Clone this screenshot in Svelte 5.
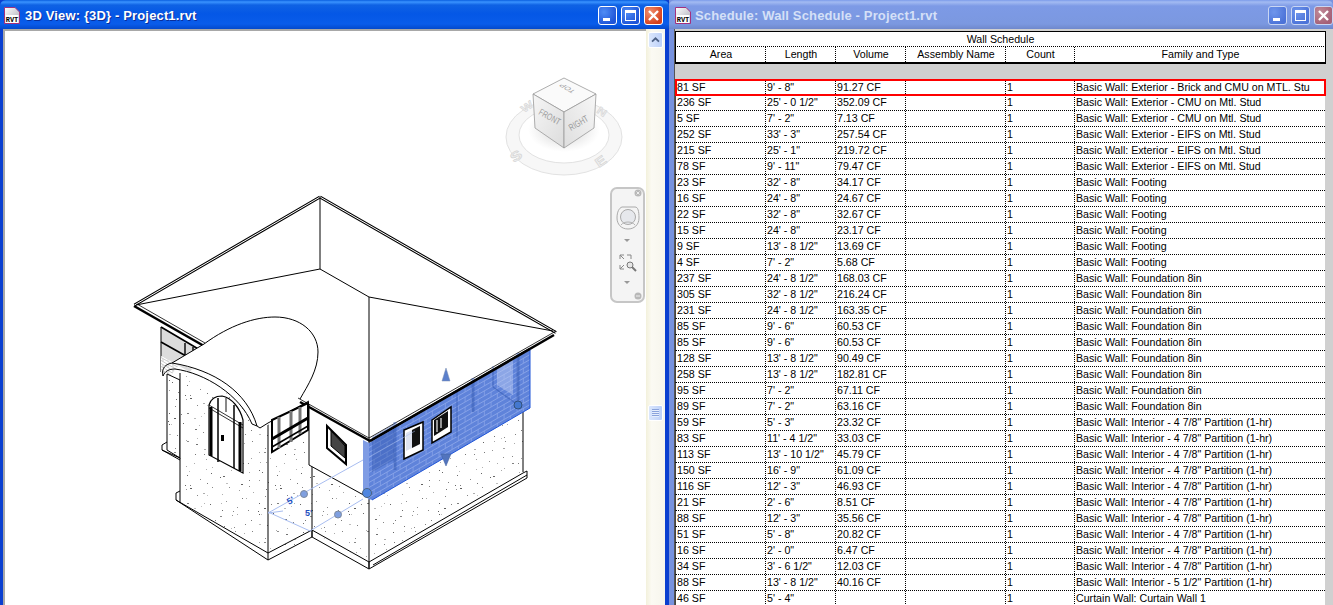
<script lang="ts">
    const ext = "Basic Wall: Exterior - ";
    const part = 'Basic Wall: Interior - 4 7/8" Partition (1-hr)';
    const found = "Basic Wall: Foundation 8in";
    const foot = "Basic Wall: Footing";

    // area, length, volume, family and type
    const rows = [
        ["81 SF", `9' - 8"`, "91.27 CF", ext + "Brick and CMU on MTL. Stu"],
        ["236 SF", `25' - 0 1/2"`, "352.09 CF", ext + "CMU on Mtl. Stud"],
        ["5 SF", `7' - 2"`, "7.13 CF", ext + "CMU on Mtl. Stud"],
        ["252 SF", `33' - 3"`, "257.54 CF", ext + "EIFS on Mtl. Stud"],
        ["215 SF", `25' - 1"`, "219.72 CF", ext + "EIFS on Mtl. Stud"],
        ["78 SF", `9' - 11"`, "79.47 CF", ext + "EIFS on Mtl. Stud"],
        ["23 SF", `32' - 8"`, "34.17 CF", foot],
        ["16 SF", `24' - 8"`, "24.67 CF", foot],
        ["22 SF", `32' - 8"`, "32.67 CF", foot],
        ["15 SF", `24' - 8"`, "23.17 CF", foot],
        ["9 SF", `13' - 8 1/2"`, "13.69 CF", foot],
        ["4 SF", `7' - 2"`, "5.68 CF", foot],
        ["237 SF", `24' - 8 1/2"`, "168.03 CF", found],
        ["305 SF", `32' - 8 1/2"`, "216.24 CF", found],
        ["231 SF", `24' - 8 1/2"`, "163.35 CF", found],
        ["85 SF", `9' - 6"`, "60.53 CF", found],
        ["85 SF", `9' - 6"`, "60.53 CF", found],
        ["128 SF", `13' - 8 1/2"`, "90.49 CF", found],
        ["258 SF", `13' - 8 1/2"`, "182.81 CF", found],
        ["95 SF", `7' - 2"`, "67.11 CF", found],
        ["89 SF", `7' - 2"`, "63.16 CF", found],
        ["59 SF", `5' - 3"`, "23.32 CF", part],
        ["83 SF", `11' - 4 1/2"`, "33.03 CF", part],
        ["113 SF", `13' - 10 1/2"`, "45.79 CF", part],
        ["150 SF", `16' - 9"`, "61.09 CF", part],
        ["116 SF", `12' - 3"`, "46.93 CF", part],
        ["21 SF", `2' - 6"`, "8.51 CF", part],
        ["88 SF", `12' - 3"`, "35.56 CF", part],
        ["51 SF", `5' - 8"`, "20.82 CF", part],
        ["16 SF", `2' - 0"`, "6.47 CF", part],
        ["34 SF", `3' - 6 1/2"`, "12.03 CF", part],
        ["88 SF", `13' - 8 1/2"`, "40.16 CF", 'Basic Wall: Interior - 5 1/2" Partition (1-hr)'],
        ["46 SF", `5' - 4"`, "", "Curtain Wall: Curtain Wall 1"],
    ];

    // stucco speckle: one dot per grid cell with jitter, seeded so the picture stays the same
    let seed = 7;
    const rnd = () => (seed = (seed * 16807) % 2147483647) / 2147483647;
    const dots = Array.from({ length: 100 }, (_, i) => ({
        x: (i % 10) * 9 + Math.floor(rnd() * 9),
        y: Math.floor(i / 10) * 9 + Math.floor(rnd() * 9),
        w: rnd() > 0.85 ? 2 : 1,
        o: 0.3 + rnd() * 0.5,
    }));
</script>

{#snippet fileIcon()}
    <svg class="fileicon" viewBox="0 0 16 17" aria-hidden="true">
        <defs>
            <linearGradient id="pg" x1="0" y1="0" x2="1" y2="1">
                <stop offset="0" stop-color="#fff" />
                <stop offset="1" stop-color="#a9a9b4" />
            </linearGradient>
        </defs>
        <path d="M.5.5H11L15.5 5V16.5H.5Z" fill="url(#pg)" stroke="#a2307e" />
        <rect x="1.5" y="8" width="13" height="8" fill="#fff" />
        <text x="8" y="15" text-anchor="middle" class="rvt">RVT</text>
    </svg>
{/snippet}

{#snippet buttons()}
    <div class="btns">
        <div class="btn"><span class="min"></span></div>
        <div class="btn"><span class="max"></span></div>
        <div class="btn close">
            <svg viewBox="0 0 19 19" aria-hidden="true"><path d="M5 5L14 14M14 5L5 14" stroke="#fff" stroke-width="2.4" /></svg>
        </div>
    </div>
{/snippet}

<div class="desktop">
    <section class="win active">
        <header class="title">
            {@render fileIcon()}
            <span class="caption">3D View: &#123;3D&#125; - Project1.rvt</span>
            {@render buttons()}
        </header>
        <div class="body">
            <div class="canvas">
                <svg class="model" viewBox="3 29 643 576" aria-hidden="true">
                    <defs>
                        <pattern id="stucco" width="90" height="90" patternUnits="userSpaceOnUse">
                            <rect width="90" height="90" fill="#fff" />
                            {#each dots as d}
                                <rect x={d.x} y={d.y} width={d.w} height="1" fill="#333" opacity={d.o} />
                            {/each}
                        </pattern>
                        <pattern id="brick" width="13" height="10" patternUnits="userSpaceOnUse" patternTransform="skewY(-30)">
                            <rect width="13" height="10" fill="#5f83da" />
                            <path d="M0 .5H13M0 5.500H13M3.500 0V5M10 5V10" stroke="#8ba6e8" stroke-width=".8" fill="none" />
                        </pattern>
                        <pattern id="brickgray" width="10" height="6" patternUnits="userSpaceOnUse" patternTransform="skewY(30)">
                            <rect width="10" height="6" fill="#fff" />
                            <path d="M0 .5H10M0 3.500H10M3 0V3M8 3V6" stroke="#ccc" fill="none" />
                        </pattern>
                        <radialGradient id="shade" cx=".5" cy=".5" r=".5">
                            <stop offset="0" stop-color="#b0b0b0" stop-opacity=".7" />
                            <stop offset="1" stop-color="#ccc" stop-opacity="0" />
                        </radialGradient>
                        <linearGradient id="cubeL" x1="0" y1="0" x2="1" y2="1">
                            <stop offset="0" stop-color="#f6f6f6" />
                            <stop offset="1" stop-color="#dcdcdc" />
                        </linearGradient>
                        <linearGradient id="cubeR" x1="1" y1="0" x2="0" y2="1">
                            <stop offset="0" stop-color="#f7f7f7" />
                            <stop offset="1" stop-color="#dedede" />
                        </linearGradient>
                    </defs>

                    <!-- view cube -->
                    <ellipse cx="564" cy="137" rx="58" ry="38" fill="#f7f7f7" stroke="#e2e2e2" />
                    <ellipse cx="564" cy="135" rx="45" ry="28" fill="#fff" stroke="#e2e2e2" />
                    <ellipse cx="564" cy="130" rx="36" ry="22" fill="url(#shade)" />
                    <g class="compass">
                        <text transform="translate(524 113) rotate(-35) scale(1 .8)">W</text>
                        <text transform="translate(596 112) rotate(35) scale(1 .8)">N</text>
                        <text transform="translate(514 163) rotate(-35) scale(1.3 1)">S</text>
                        <text transform="translate(599 168) rotate(-35) scale(1.2 1)">E</text>
                    </g>
                    <path d="M564 78L596 94L564 112L533 94Z" fill="#fafafa" stroke="#999" stroke-width=".8" />
                    <path d="M533 94L564 112V148L535 128Z" fill="url(#cubeL)" stroke="#999" stroke-width=".8" />
                    <path d="M596 94L564 112V148L594 128Z" fill="url(#cubeR)" stroke="#999" stroke-width=".8" />
                    <g class="cubetext">
                        <text transform="translate(538 114) rotate(29) scale(.9 1.25)">FRONT</text>
                        <text transform="translate(571 131) rotate(-30) scale(.9 1.25)">RIGHT</text>
                        <text transform="translate(576 91) rotate(-150) skewX(-30) scale(1 .8)">TOP</text>
                    </g>

                    <!-- gray upper block behind the porch -->
                    <path d="M161 327L204 352L190 372L161 356Z" fill="#dcdcdc" />
                    <path d="M161 327L200 350M161 342L186 356" stroke="#000" stroke-width="1.6" />
                    <path d="M185 343V357M193 347V352" stroke="#000" stroke-width="1.4" />
                    <path d="M161 327V372" stroke="#000" />
                    <path d="M161 356L178 366L170 377L161 372Z" fill="url(#brickgray)" />

                    <!-- stucco walls -->
                    <path d="M167 374L180 380V458L167 450Z" fill="url(#stucco)" stroke="#000" />
                    <path d="M180 372C205 378 240 395 257 427L268 422V553L180 502Z" fill="url(#stucco)" />
                    <path d="M268 422L309 400V467L312 537L268 560Z" fill="url(#stucco)" />
                    <path d="M309 463L369 497V562L312 532Z" fill="url(#stucco)" />
                    <path d="M369 500L523 410V472L369 562Z" fill="url(#stucco)" />
                    <path d="M180 373V503M268 423V553M312 465V537M369 440V568M523 411V472" stroke="#000" fill="none" />

                    <!-- plinth -->
                    <g class="edge">
                        <path d="M180 491L176 493V500L268 553V560" />
                        <path d="M176 500L268 560" />
                        <path d="M268 553L312 530" />
                        <path d="M268 560L312 537L369 569L527 478V471L523 473" />
                        <path d="M312 530L369 562L523 473" />
                        <path d="M312 537V530M369 562V569" />
                        <path d="M373 565L527 475" />
                        <path d="M162 445V450L180 460M162 445L167 442M162 450L180 458" />
                    </g>

                    <!-- roof -->
                    <path d="M320 197L134 305L204 344C230 325 255 317 275 317C300 317 318 332 318 352C318 370 308 385 300 399L369 440L556 333Z" fill="#fff" />
                    <path d="M320 197L134.500 305M320 197L556 332.500" class="dbl" />
                    <path d="M320 197L134.500 305M320 197L556 332.500" class="dblw" />
                    <g class="line">
                        <path d="M320 197V269L369 297V440" />
                        <path d="M136 305L320 269" />
                        <path d="M369 297L553 331" />
                    </g>
                    <path d="M134 306L204 346" class="thick" />
                    <path d="M137 304L205 343" class="thin" />

                    <!-- porch vault -->
                    <path d="M172 363L204 344C230 325 255 317 275 317C300 317 318 332 318 352C318 370 308 385 300 399L309 404V410L259 428C252 398 215 372 172 363Z" fill="#fff" />
                    <path d="M204 344C230 325 255 317 275 317C300 317 318 332 318 352C318 370 308 385 300 399" class="line" />
                    <path d="M172 363L204 344" class="line" />
                    <path d="M163 376C161 368 166 364 172 363C215 370 247 392 257 426L260 428L268 423L309 401" class="line" />
                    <path d="M163 376C165 371 169 369 175 369C205 373 240 395 252 424L257 426" class="line" />

                    <!-- plain white wall under the eave -->
                    <path d="M309 404L369 440V497L309 465Z" fill="#fff" />
                    <path d="M309 404V465L369 498" class="line" />

                    <!-- eave front -->
                    <path d="M300 402L370 441" class="thick" />
                    <path d="M298 398L369 438" class="thin" />
                    <path d="M369 438L556 331" class="thin" />
                    <path d="M370 441L554 335" class="thick" />
                    <path d="M369 440V445" class="line" />

                    <!-- arched window -->
                    <path d="M209 455V405C211 398 216 396 222 396C232 398 240 408 243 420V473Z" fill="#fff" stroke="#000" stroke-width="1.2" />
                    <path d="M211 407V456M240 422V471" stroke="#000" stroke-width="3" />
                    <path d="M218 398V462M234 405V468" stroke="#000" stroke-width="1.5" />
                    <path d="M226 398V412" stroke="#888" stroke-width="2" />
                    <path d="M209 405L243 425M209 408L243 428" class="thin" />
                    <rect x="221" y="435" width="3" height="6" fill="#000" />

                    <!-- windows on the side wall -->
                    <path d="M272 420L308 403V430L272 452Z" fill="#fff" class="heavy" />
                    <path d="M279 417V448M291 411V442M300 407V434" stroke="#777" stroke-width="3" />
                    <path d="M272 439L308 418" stroke="#000" stroke-width="3" />
                    <path d="M272 447L308 426" stroke="#000" stroke-width="1.5" />
                    <path d="M327 426L346 445V464L327 448Z" fill="#fff" class="heavy" />
                    <path d="M331 431L345 446V458L331 446Z" fill="#444" stroke="#000" />

                    <!-- selected wall highlight -->
                    <path d="M363 440L369 443V500L363 493Z" fill="#7f9ce4" />
                    <path d="M369 443L530 349V408L372 500L369 499Z" fill="url(#brick)" />
                    <path d="M372 437L394 424V460L372 472Z" fill="#2f55ad" opacity=".4" />
                    <path d="M497 368L513 358V395L497 385Z" fill="#c4d1f4" opacity=".45" />
                    <path d="M395 422V470M473 378V412M518 353V405" stroke="#2f55ad" stroke-width="3" opacity=".45" />
                    <path d="M493 387L518 405M457 392V437M493 366V387" stroke="#2f55ad" stroke-width="1.2" opacity=".5" fill="none" />
                    <path d="M372 500L530 408V349" fill="none" stroke="#1f55d8" />
                    <path d="M370 441L530 349" class="thick" />

                    <path d="M404 430L423 422V450L404 459Z" fill="#fff" stroke="#000" stroke-width="1.5" />
                    <path d="M406 433L420 426V444L406 451Z" fill="#dfe4f0" />
                    <path d="M412 430L420 426V444L412 448Z" fill="#111" />
                    <path d="M432 420L451 407V432L432 443Z" fill="#fff" stroke="#000" stroke-width="1.5" />
                    <path d="M434 420L448 411V427L434 436Z" fill="#111" />
                    <path d="M437 420V432M441 418V428" stroke="#eee" stroke-width="1.2" />

                    <!-- guides and grips -->
                    <path d="M268 513L363 460M268 512L310 531L363 499" class="guide" />
                    <path d="M268 513L283 511" class="guide" />
                    <path d="M369 457L415 431" class="guide" opacity=".5" />
                    <path d="M446 368L450 381H442Z" fill="#5b7fcb" stroke="#7a8fb0" stroke-width=".5" />
                    <path d="M441 454H451L446 466Z" fill="#5274bd" stroke="#3e5f9e" stroke-width=".5" />
                    <circle cx="304" cy="494" r="3.500" fill="#7f9fe0" stroke="#7d8a9e" />
                    <circle cx="338" cy="514.500" r="3.500" fill="#7f9fe0" stroke="#7d8a9e" />
                    <circle cx="367" cy="493" r="4.500" fill="#4f86e0" stroke="#4a6380" />
                    <circle cx="518" cy="405" r="4" fill="#4478cf" stroke="#32507a" />
                    <text class="dim" transform="translate(289 505) rotate(-30)">5'</text>
                    <text class="dim" transform="translate(305 516)">5'</text>
                </svg>

                <div class="navbar">
                    <svg viewBox="0 0 35 116" aria-hidden="true">
                        <circle cx="28" cy="6" r="3.500" fill="#b8b8b8" />
                        <path d="M26.500 4.500L29.500 7.500M29.500 4.500L26.500 7.500" stroke="#eee" />
                        <path d="M12 20H25C28 20 29 24 29 31C29 38 24 42 18 42C11 42 7 37 7 31C7 25 9 21 12 20Z" fill="#f4f4f4" stroke="#aaa" />
                        <circle cx="18" cy="30" r="7.500" fill="#e6e8ec" stroke="#aaa" />
                        <path d="M11 38C14 34 22 34 25 38" fill="none" stroke="#b4b4b4" />
                        <path d="M14 52H20L17 55Z" fill="#999" />
                        <path d="M10 68L14 72M10 68V72M10 68H14M21 68H17M21 68V72M10 82L14 78M10 82V78M10 82H14" stroke="#888" fill="none" />
                        <circle cx="20" cy="78" r="3" fill="#e6e6e6" stroke="#777" />
                        <path d="M22 80L26 84" stroke="#777" stroke-width="2" />
                        <path d="M14 94H20L17 97Z" fill="#999" />
                        <circle cx="28" cy="109" r="3.500" fill="#b8b8b8" />
                        <path d="M26 109H30" stroke="#eee" />
                    </svg>
                </div>
            </div>
            <div class="scroll">
                <div class="arrow">
                    <svg viewBox="0 0 15 16" aria-hidden="true"><path d="M3.500 10L7.500 6L11.500 10" fill="none" stroke="#4d6185" stroke-width="2" /></svg>
                </div>
                <div class="thumb"><span></span></div>
            </div>
        </div>
    </section>

    <section class="win inactive">
        <header class="title">
            {@render fileIcon()}
            <span class="caption">Schedule: Wall Schedule - Project1.rvt</span>
            {@render buttons()}
        </header>
        <div class="body sheet">
            <div class="table">
                <div class="heading">Wall Schedule</div>
                <div class="row head">
                    <span>Area</span><span>Length</span><span>Volume</span><span>Assembly Name</span><span>Count</span><span>Family and Type</span>
                </div>
                <div class="spacer"></div>
                {#each rows as r, i}
                    <div class="row" class:first={i === 0}>
                        <span>{r[0]}</span><span>{r[1]}</span><span>{r[2]}</span><span></span><span>1</span><span>{r[3]}</span>
                    </div>
                {/each}
                <div class="picked"></div>
            </div>
        </div>
    </section>
</div>

<style>
    :global(body) {
        margin: 0;
        overflow: hidden;
        background: #d0d0d0;
    }

    .desktop {
        display: flex;
        width: 1333px;
        height: 605px;
        overflow: hidden;
        font-family: "Liberation Sans", Arial, sans-serif;
    }

    .win {
        display: flex;
        flex-direction: column;
        height: 605px;
        box-sizing: border-box;
    }

    .active {
        width: 669px;
        background: #0a3fd0;
    }

    .inactive {
        width: 664px;
        background: #7792de;
    }

    .title {
        display: flex;
        align-items: center;
        height: 29px;
        flex: none;
        box-sizing: border-box;
        border-radius: 6px 6px 0 0;
    }

    .active .title {
        padding: 1px 6px 0 4px;
        background: linear-gradient(#0a5fe0 0, #3a93ff 2px, #0f62e4 5px, #0457e6 14px, #0a5cea 24px, #0449cc 29px);
    }

    .inactive .title {
        padding: 1px 0 0 6px;
        background: linear-gradient(#7c9bea 0, #a3bbf2 2px, #7d9ae6 6px, #7b98e0 24px, #6f88cc 29px);
    }

    .fileicon {
        width: 16px;
        height: 17px;
        flex: none;
    }

    .rvt {
        font: bold 7px "Liberation Mono", monospace;
        fill: #000;
    }

    .caption {
        margin-left: 4px;
        font: bold 13px "Liberation Sans", Arial, sans-serif;
        letter-spacing: 0.15px;
        white-space: nowrap;
        flex: 1;
    }

    .active .caption {
        margin-left: 5px;
        color: #fff;
        text-shadow: 1px 1px 0 #0a2e9a;
    }

    .inactive .caption {
        color: #d5e0f7;
    }

    .btns {
        display: flex;
        gap: 4px;
    }

    .btn {
        position: relative;
        width: 19px;
        height: 19px;
        box-sizing: border-box;
        border: 1px solid #fff;
        border-radius: 3px;
        background: radial-gradient(circle at 30% 30%, #4f8cf5, #1f55d8 75%);
    }

    .btn svg {
        position: absolute;
        left: -1px;
        top: -1px;
        width: 19px;
        height: 19px;
    }

    .close {
        background: radial-gradient(circle at 30% 30%, #f0906f, #d6401c 75%);
    }

    .min {
        position: absolute;
        left: 4px;
        bottom: 3px;
        width: 7px;
        height: 3px;
        background: #fff;
    }

    .max {
        position: absolute;
        left: 3px;
        top: 3px;
        width: 11px;
        height: 11px;
        box-sizing: border-box;
        border: 1px solid #fff;
        border-top-width: 3px;
    }

    .inactive .btn {
        border-color: #c9d6f3;
        background: radial-gradient(circle at 30% 30%, #6f96ec, #4c73d8 75%);
    }

    .inactive .close {
        background: radial-gradient(circle at 30% 30%, #c08a98, #a56077 75%);
    }

    .body {
        display: flex;
        flex: 1;
        min-height: 0;
    }

    .active .body {
        margin: 0 4px 0 3px;
    }

    .canvas {
        position: relative;
        flex: 1;
        box-sizing: border-box;
        background: #fff;
    }

    .canvas::before {
        content: "";
        position: absolute;
        inset: 0;
        border-top: 2px solid #a8a8a8;
        border-left: 2px solid #a8a8a8;
        z-index: 1;
    }

    .model {
        display: block;
        width: 643px;
        height: 576px;
    }

    .edge path,
    .line,
    .line path {
        fill: none;
        stroke: #000;
        stroke-width: 1;
    }

    .heavy {
        stroke: #000;
        stroke-width: 2;
    }

    .thick {
        fill: none;
        stroke: #000;
        stroke-width: 2.500;
    }

    .thin {
        fill: none;
        stroke: #000;
        stroke-width: 0.800;
    }

    .dbl {
        fill: none;
        stroke: #000;
        stroke-width: 3;
    }

    .dblw {
        fill: none;
        stroke: #fff;
        stroke-width: 1;
    }

    .guide {
        fill: none;
        stroke: #a8bdf0;
        stroke-width: 1;
    }

    .dim {
        font: bold 9px "Liberation Sans", sans-serif;
        fill: #1f50c0;
    }

    .compass text {
        font: bold 13px "Liberation Sans", sans-serif;
        fill: #eee;
        stroke: #d4d4d4;
        stroke-width: 0.600;
    }

    .cubetext text {
        font: 7.500px "Liberation Sans", sans-serif;
        fill: #9a9a9a;
    }

    .navbar {
        position: absolute;
        left: 607px;
        top: 158px;
        width: 35px;
        height: 116px;
        box-sizing: border-box;
        border: 2px solid #c6c6c6;
        border-radius: 7px;
        background: #f4f4f4;
    }

    .navbar svg {
        position: absolute;
        left: -2px;
        top: -2px;
        width: 35px;
        height: 116px;
    }

    .scroll {
        position: relative;
        width: 19px;
        flex: none;
        background: linear-gradient(90deg, #f3f1dc, #fbfaf3 30%, #f6f5ec);
    }

    .arrow,
    .thumb {
        position: absolute;
        left: 2px;
        width: 15px;
        box-sizing: border-box;
        border: 1px solid #fff;
        border-radius: 2px;
        background: linear-gradient(90deg, #dbe7fd, #bcd0f8);
    }

    .arrow {
        top: 3px;
        height: 16px;
    }

    .arrow svg {
        display: block;
        width: 13px;
        height: 14px;
    }

    .thumb {
        top: 376px;
        height: 16px;
    }

    .thumb span {
        display: block;
        width: 7px;
        height: 8px;
        margin: 3px 3px;
        background: repeating-linear-gradient(#8aa3dc 0 1px, #e6eefc 1px 2px);
    }

    .sheet {
        margin-left: 5px;
        border-left: 1px solid #555;
        background: #d0d0d0;
        padding-top: 2px;
    }

    .table {
        position: relative;
        width: 651px;
        height: 574px;
        flex: none;
        font-size: 10.650px;
        color: #000;
    }

    .heading {
        box-sizing: border-box;
        height: 16px;
        border-top: 1px solid #000;
        border-right: 1px solid #000;
        border-left: 1px solid #000;
        border-bottom: 1px dotted #000;
        background: #fff;
        text-align: center;
        line-height: 15px;
    }

    .row {
        display: grid;
        grid-template-columns: 90px 70px 70px 100px 69px 1fr;
        box-sizing: border-box;
        height: 16px;
        margin-right: 1px;
        border-left: 1px solid #444;
        border-bottom: 1px dotted #000;
        background: #fff;
        line-height: 15px;
        white-space: nowrap;
    }

    .first {
        line-height: 16px;
    }

    .row span {
        box-sizing: border-box;
        padding-left: 1px;
        overflow: hidden;
        border-right: 1px dotted #000;
    }

    .row span:last-child {
        border-right: 0;
    }

    .head {
        margin-right: 0;
        border-right: 1px solid #000;
        border-left: 1px solid #000;
        border-bottom: 2px solid #000;
        height: 17px;
        text-align: center;
    }

    .spacer {
        height: 15px;
    }

    .picked {
        position: absolute;
        left: 0;
        top: 48px;
        width: 651px;
        height: 17px;
        box-sizing: border-box;
        border: 2px solid #f00;
    }
</style>
